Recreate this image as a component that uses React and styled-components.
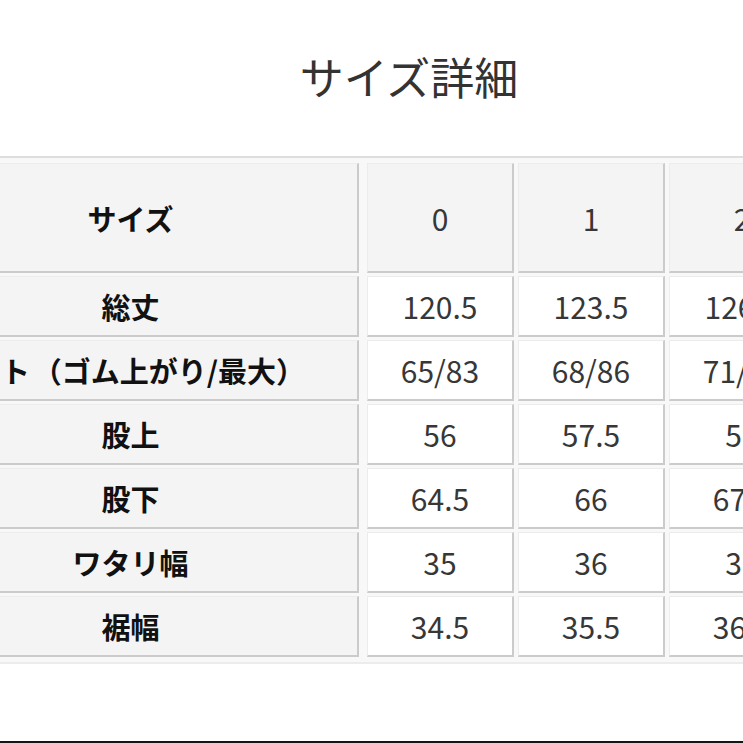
import React from 'react';
import styled, { createGlobalStyle } from 'styled-components';

const GlobalStyle = createGlobalStyle`
    html, body {
        margin: 0;
        padding: 0;
        background: #ffffff;
        overflow: hidden;
    }
    body {
        font-family: "Noto Sans CJK JP", "Noto Sans", sans-serif;
    }
`

const Page = styled.div`
    width: 743px;
    height: 743px;
    overflow: hidden;
    display: flex;
    flex-direction: column;
    background: #ffffff;
`

const Heading = styled.h1`
    margin: 0;
    height: 152px;
    line-height: 152px;
    padding-left: 75px;
    text-align: center;
    font-size: 44px;
    font-weight: 400;
    color: #333333;
    flex-shrink: 0;
`

const TableArea = styled.div`
    margin-top: 4px;
    margin-left: -97px;
    padding: 5px 0 5px;
    border-top: 2px solid #dedede;
    border-bottom: 2px solid #ececec;
    background: #f8f8f8;
    flex-shrink: 0;
`

const SizeTable = styled.div`
    display: grid;
    grid-template-columns: 460px repeat(4, 147px);
    grid-template-rows: 110px repeat(6, 61px);
    column-gap: 4px;
    row-gap: 3px;
    width: max-content;
`

const Cell = styled.div`
    box-sizing: border-box;
    display: flex;
    align-items: center;
    justify-content: center;
    white-space: nowrap;
    border-style: solid;
    border-width: 1px 2px 2px 1px;
    border-color: #ececec #cbcbcb #cbcbcb #ececec;
    font-size: 29px;
    background: ${p => (p.$head ? '#f4f4f4' : '#ffffff')};
`

const LabelCell = styled(Cell)`
    margin-right: 4px;
    background: #f4f4f4;
    color: #111111;
    font-weight: 700;
`

const Note = styled.span`
    margin: 0 1.45em 0 0.1em;
`

const ValueCell = styled(Cell)`
    color: #373737;
    font-weight: 400;
    font-size: 30px;
`

const BottomEdge = styled.div`
    margin-top: auto;
    height: 2px;
    background: #151515;
    flex-shrink: 0;
`

const sizes = ['0', '1', '2', '3']

const rows = [
    { label: '総丈', values: ['120.5', '123.5', '126.5', '129.5'] },
    { label: 'ウエスト', note: '（ゴム上がり/最大）', values: ['65/83', '68/86', '71/89', '74/92'] },
    { label: '股上', values: ['56', '57.5', '59', '60.5'] },
    { label: '股下', values: ['64.5', '66', '67.5', '69'] },
    { label: 'ワタリ幅', values: ['35', '36', '37', '38'] },
    { label: '裾幅', values: ['34.5', '35.5', '36.5', '37.5'] },
]

export default function App() {
    return (
        <Page>
            <GlobalStyle />
            <Heading>サイズ詳細</Heading>
            <TableArea>
                <SizeTable>
                    <LabelCell>サイズ</LabelCell>
                    {sizes.map(s => (
                        <ValueCell key={s} $head>{s}</ValueCell>
                    ))}
                    {rows.map(row => (
                        <React.Fragment key={row.label}>
                            <LabelCell>
                                {row.label}
                                {row.note && <Note>{row.note}</Note>}
                            </LabelCell>
                            {row.values.map((v, i) => (
                                <ValueCell key={i}>{v}</ValueCell>
                            ))}
                        </React.Fragment>
                    ))}
                </SizeTable>
            </TableArea>
            <BottomEdge />
        </Page>
    );
}
